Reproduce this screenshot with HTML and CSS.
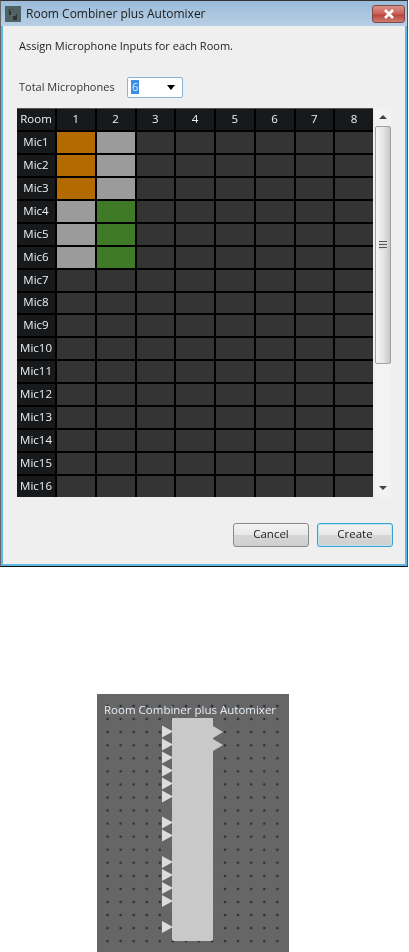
FILE: index.html
```html
<!DOCTYPE html>
<html lang="en">
<head>
<meta charset="utf-8">
<title>Room Combiner plus Automixer</title>
<link rel="stylesheet" href="styles.css">
</head>
<body>
<div class="dialog">
  <div class="titlebar">
    <svg class="app-icon" width="16" height="16" viewBox="0 0 16 16"><rect width="16" height="16" fill="#4f6364"/><path d="M4 3h4v5h4v6H8V9H4z" fill="#2c3436"/><path d="M5 4h2v5h4" fill="none" stroke="#7b8a8b"/></svg>
    <span class="title">Room Combiner plus Automixer</span>
    <div class="close"><svg width="12" height="10" viewBox="0 0 12 10"><path d="M2 1l8 8M10 1L2 9" stroke="#fff" stroke-width="2.6"/></svg></div>
  </div>
  <div class="client">
    <p class="hint">Assign Microphone Inputs for each Room.</p>
    <div class="total">
      <span class="total-label">Total Microphones</span>
      <div class="select"><span class="sel-value">6</span><span class="sel-arrow"></span></div>
    </div>
    <div class="matrix-wrap">
      <div class="matrix">
        <div class="hd">Room</div><div class="hd">1</div><div class="hd">2</div><div class="hd">3</div><div class="hd">4</div><div class="hd">5</div><div class="hd">6</div><div class="hd">7</div><div class="hd">8</div>
        <div class="hd">Mic1</div><div class="c o"></div><div class="c g"></div><div class="c"></div><div class="c"></div><div class="c"></div><div class="c"></div><div class="c"></div><div class="c"></div>
        <div class="hd">Mic2</div><div class="c o"></div><div class="c g"></div><div class="c"></div><div class="c"></div><div class="c"></div><div class="c"></div><div class="c"></div><div class="c"></div>
        <div class="hd">Mic3</div><div class="c o"></div><div class="c g"></div><div class="c"></div><div class="c"></div><div class="c"></div><div class="c"></div><div class="c"></div><div class="c"></div>
        <div class="hd">Mic4</div><div class="c g"></div><div class="c v"></div><div class="c"></div><div class="c"></div><div class="c"></div><div class="c"></div><div class="c"></div><div class="c"></div>
        <div class="hd">Mic5</div><div class="c g"></div><div class="c v"></div><div class="c"></div><div class="c"></div><div class="c"></div><div class="c"></div><div class="c"></div><div class="c"></div>
        <div class="hd">Mic6</div><div class="c g"></div><div class="c v"></div><div class="c"></div><div class="c"></div><div class="c"></div><div class="c"></div><div class="c"></div><div class="c"></div>
        <div class="hd">Mic7</div><div class="c"></div><div class="c"></div><div class="c"></div><div class="c"></div><div class="c"></div><div class="c"></div><div class="c"></div><div class="c"></div>
        <div class="hd">Mic8</div><div class="c"></div><div class="c"></div><div class="c"></div><div class="c"></div><div class="c"></div><div class="c"></div><div class="c"></div><div class="c"></div>
        <div class="hd">Mic9</div><div class="c"></div><div class="c"></div><div class="c"></div><div class="c"></div><div class="c"></div><div class="c"></div><div class="c"></div><div class="c"></div>
        <div class="hd">Mic10</div><div class="c"></div><div class="c"></div><div class="c"></div><div class="c"></div><div class="c"></div><div class="c"></div><div class="c"></div><div class="c"></div>
        <div class="hd">Mic11</div><div class="c"></div><div class="c"></div><div class="c"></div><div class="c"></div><div class="c"></div><div class="c"></div><div class="c"></div><div class="c"></div>
        <div class="hd">Mic12</div><div class="c"></div><div class="c"></div><div class="c"></div><div class="c"></div><div class="c"></div><div class="c"></div><div class="c"></div><div class="c"></div>
        <div class="hd">Mic13</div><div class="c"></div><div class="c"></div><div class="c"></div><div class="c"></div><div class="c"></div><div class="c"></div><div class="c"></div><div class="c"></div>
        <div class="hd">Mic14</div><div class="c"></div><div class="c"></div><div class="c"></div><div class="c"></div><div class="c"></div><div class="c"></div><div class="c"></div><div class="c"></div>
        <div class="hd">Mic15</div><div class="c"></div><div class="c"></div><div class="c"></div><div class="c"></div><div class="c"></div><div class="c"></div><div class="c"></div><div class="c"></div>
        <div class="hd">Mic16</div><div class="c"></div><div class="c"></div><div class="c"></div><div class="c"></div><div class="c"></div><div class="c"></div><div class="c"></div><div class="c"></div>
      </div>
      <div class="scrollbar">
        <div class="sb-btn"><span class="arrow-up"></span></div>
        <div class="thumb"><span class="grip"></span></div>
        <div class="sb-rest"></div>
        <div class="sb-btn"><span class="arrow-down"></span></div>
      </div>
    </div>
    <div class="actions">
      <button class="btn" type="button">Cancel</button>
      <button class="btn btn-default" type="button">Create</button>
    </div>
  </div>
</div>
<div class="canvas">
  <svg class="block" width="192" height="258" viewBox="0 0 192 258">
    <path d="M75 24H116V32L126 38L116 44V45L126 51L116 57V245a2 2 0 0 1-2 2H77a2 2 0 0 1-2-2Z" fill="#c9c9c9"/>
    <g fill="#dcdcdc">
      <path d="M65 31.500l11 6-11 6z"/><path d="M65 44.500l11 6-11 6z"/><path d="M65 57.500l11 6-11 6z"/><path d="M65 70.500l11 6-11 6z"/><path d="M65 83.500l11 6-11 6z"/><path d="M65 96.500l11 6-11 6z"/>
      <path d="M65 122.500l11 6-11 6z"/><path d="M65 135.500l11 6-11 6z"/>
      <path d="M65 162l11 6-11 6z"/><path d="M65 175l11 6-11 6z"/><path d="M65 188l11 6-11 6z"/><path d="M65 201l11 6-11 6z"/>
      <path d="M65 227l11 6-11 6z"/>
    </g>
  </svg>
  <span class="canvas-title">Room Combiner plus Automixer</span>
</div>
</body>
</html>
```
FILE: styles.css
```css
* { box-sizing: border-box; }
html, body { margin: 0; padding: 0; background: #fff; overflow: hidden; }
body { width: 409px; height: 952px; font-family: "Open Sans", "Noto Sans", "Liberation Sans", sans-serif; }

.dialog {
  width: 408px;
  height: 567px;
  display: flex;
  flex-direction: column;
  background: #5fb8e0;
  border-top: 1px solid #333;
  border-bottom: 1px solid #111;
  border-left: 1px solid #666;
  border-right: 1px solid #555;
  filter: blur(0.2px);
}
.titlebar {
  height: 25px;
  flex: none;
  display: flex;
  align-items: center;
  padding: 0 2px 0 4px;
  background: linear-gradient(#9bbbd9, #b7cfe5);
}
.app-icon { flex: none; }
.title { margin-left: 5px; font-size: 12px; color: #1c1c1c; flex: 1; }
.close {
  width: 33px;
  height: 18px;
  margin-top: 1px;
  border: 1px solid #7a4a48;
  border-radius: 3px;
  background: linear-gradient(#dd928a, #c9605a 50%, #b8433c 55%, #cf7d72);
  display: flex;
  align-items: center;
  justify-content: center;
}
.client {
  flex: 1;
  margin: 0 2px 2px 2px;
  background: #efefef;
  display: flex;
  flex-direction: column;
  padding: 0 0 16px 14px;
}
.hint { margin: 12px 0 0 2px; font-size: 11px; line-height: 16px; color: #222; }
.total { display: flex; align-items: center; margin: 23px 0 0 2px; height: 20px; }
.total-label { width: 108px; font-size: 11px; color: #333; padding-bottom: 1px; }
.select {
  width: 56px;
  height: 21px;
  background: #fff;
  border: 1px solid #8fb4d4;
  border-radius: 2px;
  display: flex;
  align-items: center;
  padding: 0 7px 0 3px;
  justify-content: space-between;
}
.sel-value { background: #3a8ee6; color: #dfeeff; font-size: 11px; line-height: 14px; padding: 0 1px; }
.sel-arrow { width: 0; height: 0; border: 4px solid transparent; border-top: 5px solid #000; border-bottom: 0; }

.matrix-wrap { display: flex; margin-top: 11px; height: 389px; }
.matrix {
  width: 356px;
  height: 389px;
  display: grid;
  grid-template-columns: 38px repeat(8, 1fr);
  grid-template-rows: repeat(17, 1fr);
  gap: 2px;
  background: #000;
  border-top: 1px solid #555;
}
.hd {
  background: #17191b;
  color: #eef0f2;
  font-size: 11.5px;
  display: flex;
  align-items: center;
  justify-content: center;
  padding-bottom: 2px;
}
.c { background: #343434; }
.o { background: #b36a00; }
.g { background: #9b9b9b; }
.v { background: #3f7a27; }

.scrollbar { width: 16px; margin-left: 2px; display: flex; flex-direction: column; background: #f3f3f3; }
.sb-btn { height: 18px; flex: none; display: flex; align-items: center; justify-content: center; }
.arrow-up { width: 0; height: 0; border: 4px solid transparent; border-bottom: 4px solid #444; border-top: 0; }
.arrow-down { width: 0; height: 0; border: 4px solid transparent; border-top: 4px solid #444; border-bottom: 0; }
.thumb {
  height: 238px;
  flex: none;
  border: 1px solid #a0a0a0;
  border-radius: 2px;
  background: linear-gradient(90deg, #f4f4f4, #e6e6e6 50%, #c6c6c6);
  display: flex;
  align-items: center;
  justify-content: center;
}
.grip { width: 8px; height: 9px; background: repeating-linear-gradient(#555 0 1px, #ddd 1px 3px); }
.sb-rest { flex: 1; }

.actions { display: flex; justify-content: flex-end; gap: 8px; margin-top: 26px; padding-right: 12px; }
.btn {
  width: 76px;
  height: 24px;
  padding: 0 0 3px;
  font-family: inherit;
  font-size: 11.5px;
  color: #222;
  border: 1px solid #8a8a8a;
  border-radius: 3px;
  background: linear-gradient(#f3f3f3, #e8e8e8 48%, #d6d6d6 52%, #cfcfcf);
}
.btn-default { border-color: #3aa0d0; box-shadow: inset 0 0 0 1px #bfe6f7; }

.canvas {
  position: relative;
  width: 192px;
  height: 258px;
  margin: 127px 0 0 97px;
  background-color: #666;
  background-image: radial-gradient(circle at center, #2e2e2e 0 1px, transparent 1.6px);
  background-size: 13.07px 13.07px;
  background-position: 4px 5.5px;
  filter: blur(0.3px);
}
.block { position: absolute; left: 0; top: 0; }
.canvas-title {
  position: absolute;
  left: 7px;
  top: 8px;
  font-size: 11.5px;
  line-height: 15px;
  color: #e6eef6;
  white-space: nowrap;
}
```
